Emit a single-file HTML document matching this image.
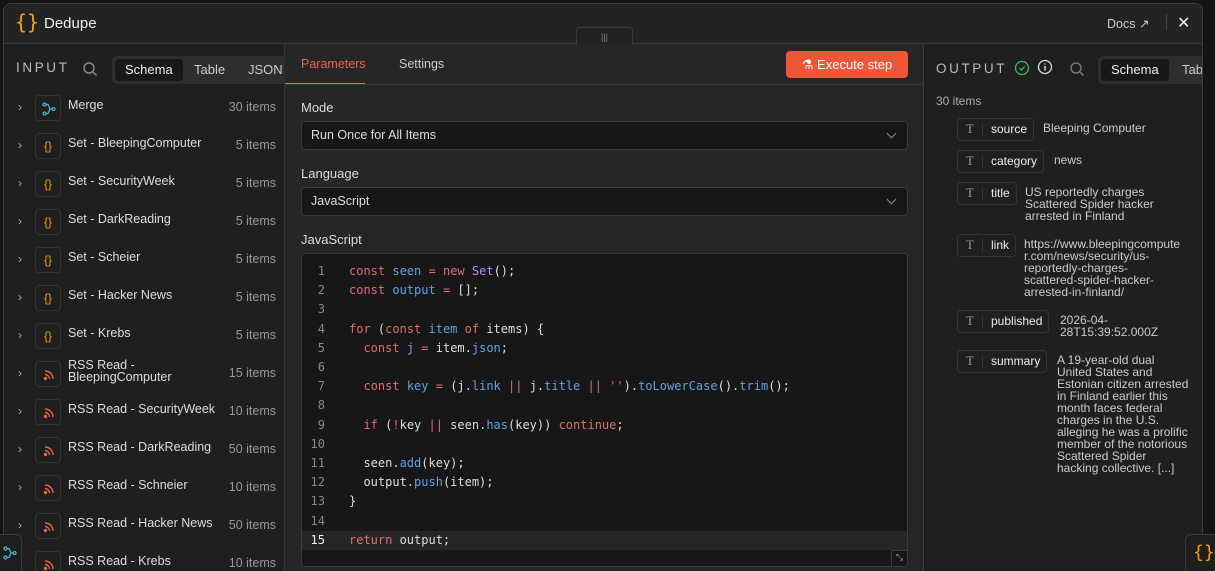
<!DOCTYPE html>
<html><head><meta charset="utf-8"><style>
*{box-sizing:border-box;margin:0;padding:0}
html,body{width:1215px;height:571px;overflow:hidden}
body{background:#141414;font-family:"Liberation Sans",sans-serif;position:relative;color:#e0e0e0}
.abs{position:absolute}
.modal{position:absolute;left:3px;top:3px;width:1200px;height:568px;background:#222;border:1px solid #3a3a3a;border-bottom:none;border-radius:8px 8px 0 0;overflow:hidden}
.hdr{position:absolute;left:0;top:0;width:1200px;height:40px;background:#232323;border-bottom:1px solid #3a3a3a}
.left{position:absolute;left:0;top:40px;width:281px;height:528px;background:#1f1f1f;border-right:1px solid #333}
.center{position:absolute;left:281px;top:40px;width:638px;height:528px;background:#262626}
.right{position:absolute;left:919px;top:40px;width:290px;height:528px;background:#1f1f1f;border-left:1px solid #3a3a3a}
.lbl{font-size:13.5px;letter-spacing:2.6px;color:#bbb}
.tabs{position:absolute;height:28px;background:#2e2e2e;border-radius:5px;font-size:13px}
.tabs span{position:absolute;top:3px;height:22px;line-height:22px;padding:0 10px;color:#ccc}
.tabs span.on{background:#181818;color:#eee;border-radius:4px}
.row{position:absolute;left:0;width:281px;height:38px;font-size:12.5px}
.row .ch{position:absolute;left:14px;top:11px;color:#aaa;font-size:12px}
.row .ic{position:absolute;left:31px;top:6px;width:26px;height:26px;border:1px solid #333;border-radius:4px;text-align:center;line-height:24px;font-size:12px}
.row .ic svg{position:absolute;left:6px;top:6px}
.row .nm{position:absolute;left:64px;top:10px;color:#ddd;line-height:12px;white-space:nowrap}
.row .ct{position:absolute;right:9px;top:11px;color:#999}
.fl{position:absolute;left:16px;font-size:13px;color:#ddd}
.sel{position:absolute;left:16px;width:607px;height:29px;background:#171717;border:1px solid #3a3a3a;border-radius:4px;font-size:12.5px;color:#ddd;line-height:27px;padding-left:9px}
.sel:after{content:"";position:absolute;right:12px;top:8px;width:6px;height:6px;border-right:1px solid #888;border-bottom:1px solid #888;transform:rotate(45deg)}
.code{position:absolute;left:16px;top:209px;width:607px;height:314px;background:#171717;border:1px solid #3a3a3a;border-radius:4px;overflow:hidden;font-family:"DejaVu Sans Mono","Liberation Mono",monospace;font-size:12px}
.ln{position:absolute;left:0;width:605px;height:19px;line-height:19px}
.ln .n{position:absolute;left:0;width:23px;text-align:right;color:#888}
.ln .c{position:absolute;left:47px;color:#ddd;white-space:pre}
.k{color:#e06c75}.v{color:#61a0e6}.p{color:#b389f0}
.fld{position:absolute;font-size:12px}
.fld .b{position:absolute;left:0;top:0;height:23px;border:1px solid #333;border-radius:4px;padding:0 6px 0 33px;line-height:20px;color:#eee;white-space:nowrap}
.fld .b:before{content:"T";position:absolute;left:8px;top:0;color:#999;font-family:"Liberation Serif",serif;font-size:13px}
.fld .b:after{content:"";position:absolute;left:24px;top:3px;height:15px;border-left:1px solid #333}
.fld .t{position:absolute;top:4px;color:#ccc;line-height:12px;font-size:12px;white-space:nowrap}
</style></head><body>
<div class="modal">
 <div class="hdr">
  <div class="abs" style="left:11px;top:6px;color:#f59e0b;font-size:20px;font-family:'DejaVu Sans Mono',monospace">{}</div>
  <div class="abs" style="left:40px;top:11px;font-size:15px;color:#eee">Dedupe</div>
  <div class="abs" style="left:1103px;top:12px;font-size:12.5px;color:#ccc">Docs ↗</div>
  <div class="abs" style="left:1162px;top:10px;width:1px;height:16px;background:#444"></div>
  <div class="abs" style="left:1173px;top:9px;font-size:16px;color:#eee">✕</div>
 </div>
 <div class="abs" style="left:572px;top:23px;width:57px;height:18px;background:#222;border:1px solid #3a3a3a;border-bottom:none;border-radius:4px 4px 0 0;text-align:center;color:#888;font-size:9px;line-height:18px;z-index:3">|||</div>
 <div class="left">
  <div class="abs lbl" style="left:12px;top:16px">INPUT</div>
  <svg class="abs" style="left:78px;top:17px" width="16" height="16" viewBox="0 0 16 16"><circle cx="7" cy="7" r="5" stroke="#888" stroke-width="1.5" fill="none"/><path d="M11 11l3.5 3.5" stroke="#888" stroke-width="1.5"/></svg>
  <div class="tabs" style="left:108px;top:12px;width:180px"><span class="on" style="left:3px">Schema</span><span style="left:72px">Table</span><span style="left:126px">JSON</span></div>
  <div class="row" style="top:45px"><span class="ch">›</span><span class="ic"><svg width="14" height="14" viewBox="0 0 14 14" fill="none" stroke="#4ab3c9" stroke-width="1.3"><circle cx="2.5" cy="2.5" r="1.5"/><circle cx="2.5" cy="11.5" r="1.5"/><circle cx="11.5" cy="7" r="1.5"/><path d="M4 2.5h2l2 4.5h2M4 11.5h2l2-4.5"/></svg></span><span class="nm">Merge</span><span class="ct">30 items</span></div>
  <div class="row" style="top:83px"><span class="ch">›</span><span class="ic" style="color:#f59e0b">{}</span><span class="nm">Set - BleepingComputer</span><span class="ct">5 items</span></div>
  <div class="row" style="top:121px"><span class="ch">›</span><span class="ic" style="color:#f59e0b">{}</span><span class="nm">Set - SecurityWeek</span><span class="ct">5 items</span></div>
  <div class="row" style="top:159px"><span class="ch">›</span><span class="ic" style="color:#f59e0b">{}</span><span class="nm">Set - DarkReading</span><span class="ct">5 items</span></div>
  <div class="row" style="top:197px"><span class="ch">›</span><span class="ic" style="color:#f59e0b">{}</span><span class="nm">Set - Scheier</span><span class="ct">5 items</span></div>
  <div class="row" style="top:235px"><span class="ch">›</span><span class="ic" style="color:#f59e0b">{}</span><span class="nm">Set - Hacker News</span><span class="ct">5 items</span></div>
  <div class="row" style="top:273px"><span class="ch">›</span><span class="ic" style="color:#f59e0b">{}</span><span class="nm">Set - Krebs</span><span class="ct">5 items</span></div>
  <div class="row" style="top:311px"><span class="ch">›</span><span class="ic"><svg width="14" height="14" viewBox="0 0 14 14" fill="none" stroke="#e8643c" stroke-width="1.4"><path d="M3 3a8 8 0 0 1 8 8M3 6.5a4.5 4.5 0 0 1 4.5 4.5"/><circle cx="3.5" cy="10.5" r="1" fill="#e8643c"/></svg></span><span class="nm" style="top:4px">RSS Read -<br>BleepingComputer</span><span class="ct">15 items</span></div>
  <div class="row" style="top:349px"><span class="ch">›</span><span class="ic"><svg width="14" height="14" viewBox="0 0 14 14" fill="none" stroke="#e8643c" stroke-width="1.4"><path d="M3 3a8 8 0 0 1 8 8M3 6.5a4.5 4.5 0 0 1 4.5 4.5"/><circle cx="3.5" cy="10.5" r="1" fill="#e8643c"/></svg></span><span class="nm">RSS Read - SecurityWeek</span><span class="ct">10 items</span></div>
  <div class="row" style="top:387px"><span class="ch">›</span><span class="ic"><svg width="14" height="14" viewBox="0 0 14 14" fill="none" stroke="#e8643c" stroke-width="1.4"><path d="M3 3a8 8 0 0 1 8 8M3 6.5a4.5 4.5 0 0 1 4.5 4.5"/><circle cx="3.5" cy="10.5" r="1" fill="#e8643c"/></svg></span><span class="nm">RSS Read - DarkReading</span><span class="ct">50 items</span></div>
  <div class="row" style="top:425px"><span class="ch">›</span><span class="ic"><svg width="14" height="14" viewBox="0 0 14 14" fill="none" stroke="#e8643c" stroke-width="1.4"><path d="M3 3a8 8 0 0 1 8 8M3 6.5a4.5 4.5 0 0 1 4.5 4.5"/><circle cx="3.5" cy="10.5" r="1" fill="#e8643c"/></svg></span><span class="nm">RSS Read - Schneier</span><span class="ct">10 items</span></div>
  <div class="row" style="top:463px"><span class="ch">›</span><span class="ic"><svg width="14" height="14" viewBox="0 0 14 14" fill="none" stroke="#e8643c" stroke-width="1.4"><path d="M3 3a8 8 0 0 1 8 8M3 6.5a4.5 4.5 0 0 1 4.5 4.5"/><circle cx="3.5" cy="10.5" r="1" fill="#e8643c"/></svg></span><span class="nm">RSS Read - Hacker News</span><span class="ct">50 items</span></div>
  <div class="row" style="top:501px"><span class="ch">›</span><span class="ic"><svg width="14" height="14" viewBox="0 0 14 14" fill="none" stroke="#e8643c" stroke-width="1.4"><path d="M3 3a8 8 0 0 1 8 8M3 6.5a4.5 4.5 0 0 1 4.5 4.5"/><circle cx="3.5" cy="10.5" r="1" fill="#e8643c"/></svg></span><span class="nm">RSS Read - Krebs</span><span class="ct">10 items</span></div>
 </div>
 <div class="center">
  <div class="abs" style="left:16px;top:13px;font-size:12.5px;color:#f0634a">Parameters</div>
  <div class="abs" style="left:0;top:39px;width:80px;height:2px;background:#f0634a"></div>
  <div class="abs" style="left:114px;top:13px;font-size:12.5px;color:#ccc">Settings</div>
  <div class="abs" style="left:0;top:40px;width:638px;height:1px;background:#3a3a3a"></div>
  <div class="abs" style="left:501px;top:7px;width:122px;height:27px;background:#ef5539;border-radius:4px;color:#fff;font-size:13px;line-height:27px;text-align:center">⚗ Execute step</div>
  <div class="fl" style="top:56px">Mode</div>
  <div class="sel" style="top:77px">Run Once for All Items</div>
  <div class="fl" style="top:122px">Language</div>
  <div class="sel" style="top:143px">JavaScript</div>
  <div class="fl" style="top:188px">JavaScript</div>
  <div class="code">
   <div class="ln" style="top:8px"><span class="n">1</span><span class="c"><span class="k">const</span> <span class="v">seen</span> <span class="k">=</span> <span class="k">new</span> <span class="p">Set</span>();</span></div>
   <div class="ln" style="top:27px"><span class="n">2</span><span class="c"><span class="k">const</span> <span class="v">output</span> <span class="k">=</span> [];</span></div>
   <div class="ln" style="top:46px"><span class="n">3</span></div>
   <div class="ln" style="top:66px"><span class="n">4</span><span class="c"><span class="k">for</span> (<span class="k">const</span> <span class="v">item</span> <span class="k">of</span> items) {</span></div>
   <div class="ln" style="top:85px"><span class="n">5</span><span class="c">  <span class="k">const</span> <span class="v">j</span> <span class="k">=</span> item.<span class="v">json</span>;</span></div>
   <div class="ln" style="top:104px"><span class="n">6</span></div>
   <div class="ln" style="top:123px"><span class="n">7</span><span class="c">  <span class="k">const</span> <span class="v">key</span> <span class="k">=</span> (j.<span class="v">link</span> <span class="k">||</span> j.<span class="v">title</span> <span class="k">||</span> <span class="k">''</span>).<span class="v">toLowerCase</span>().<span class="v">trim</span>();</span></div>
   <div class="ln" style="top:142px"><span class="n">8</span></div>
   <div class="ln" style="top:162px"><span class="n">9</span><span class="c">  <span class="k">if</span> (<span class="k">!</span>key <span class="k">||</span> seen.<span class="v">has</span>(key)) <span class="k">continue</span>;</span></div>
   <div class="ln" style="top:181px"><span class="n">10</span></div>
   <div class="ln" style="top:200px"><span class="n">11</span><span class="c">  seen.<span class="v">add</span>(key);</span></div>
   <div class="ln" style="top:219px"><span class="n">12</span><span class="c">  output.<span class="v">push</span>(item);</span></div>
   <div class="ln" style="top:238px"><span class="n">13</span><span class="c">}</span></div>
   <div class="ln" style="top:258px"><span class="n">14</span></div>
   <div class="ln" style="top:277px;background:#262626"><span class="n" style="color:#eee">15</span><span class="c"><span class="k">return</span> output;</span></div>
   <div class="abs" style="right:0;top:296px;width:16px;height:16px;border-left:1px solid #3a3a3a;border-top:1px solid #3a3a3a;color:#999;font-size:9px;text-align:center;line-height:15px">⤡</div>
  </div>
 </div>
 <div class="right">
  <div class="abs lbl" style="left:12px;top:17px">OUTPUT</div>
  <svg class="abs" style="left:90px;top:16px" width="16" height="16"><circle cx="8" cy="8" r="6.5" stroke="#3fb950" stroke-width="1.3" fill="none"/><path d="M5.5 8l2 2 3-3.5" stroke="#3fb950" stroke-width="1.3" fill="none"/></svg>
  <svg class="abs" style="left:113px;top:15px" width="16" height="16"><circle cx="8" cy="8" r="6.5" stroke="#ddd" stroke-width="1.3" fill="none"/><path d="M8 7v4.5M8 4.5v1" stroke="#ddd" stroke-width="1.5"/></svg>
  <svg class="abs" style="left:145px;top:17px" width="16" height="16" viewBox="0 0 16 16"><circle cx="7" cy="7" r="5" stroke="#777" stroke-width="1.5" fill="none"/><path d="M11 11l3.5 3.5" stroke="#777" stroke-width="1.5"/></svg>
  <div class="tabs" style="left:174px;top:12px;width:120px"><span class="on" style="left:3px">Schema</span><span style="left:74px">Table</span></div>
  <div class="abs" style="left:12px;top:50px;font-size:12px;color:#aaa">30 items</div>
  <div class="fld" style="left:33px;top:74px"><span class="b">source</span><span class="t" style="left:86px">Bleeping Computer</span></div>
  <div class="fld" style="left:33px;top:106px"><span class="b">category</span><span class="t" style="left:97px">news</span></div>
  <div class="fld" style="left:33px;top:138px"><span class="b">title</span><span class="t" style="left:68px">US reportedly charges<br>Scattered Spider hacker<br>arrested in Finland</span></div>
  <div class="fld" style="left:33px;top:190px"><span class="b">link</span><span class="t" style="left:67px">https://www.bleepingcompute<br>r.com/news/security/us-<br>reportedly-charges-<br>scattered-spider-hacker-<br>arrested-in-finland/</span></div>
  <div class="fld" style="left:33px;top:266px"><span class="b">published</span><span class="t" style="left:103px">2026-04-<br>28T15:39:52.000Z</span></div>
  <div class="fld" style="left:33px;top:306px"><span class="b">summary</span><span class="t" style="left:100px">A 19-year-old dual<br>United States and<br>Estonian citizen arrested<br>in Finland earlier this<br>month faces federal<br>charges in the U.S.<br>alleging he was a prolific<br>member of the notorious<br>Scattered Spider<br>hacking collective. [...]</span></div>
 </div>
</div>
<div class="abs" style="left:-10px;top:534px;width:32px;height:37px;background:#1f1f1f;border:1px solid #3a3a3a;border-bottom:none;border-radius:6px 6px 0 0"><svg style="position:absolute;left:12px;top:11px" width="14" height="14" viewBox="0 0 14 14" fill="none" stroke="#4ab3c9" stroke-width="1.3"><circle cx="2.5" cy="2.5" r="1.5"/><circle cx="2.5" cy="11.5" r="1.5"/><circle cx="11.5" cy="7" r="1.5"/><path d="M4 2.5h2l2 4.5h2M4 11.5h2l2-4.5"/></svg></div>
<div class="abs" style="left:1185px;top:534px;width:40px;height:37px;background:#1f1f1f;border:1px solid #3a3a3a;border-bottom:none;border-radius:6px 6px 0 0;color:#f59e0b;font-size:18px;line-height:36px;padding-left:7px;font-family:'DejaVu Sans Mono',monospace">{}</div>
</body></html>
